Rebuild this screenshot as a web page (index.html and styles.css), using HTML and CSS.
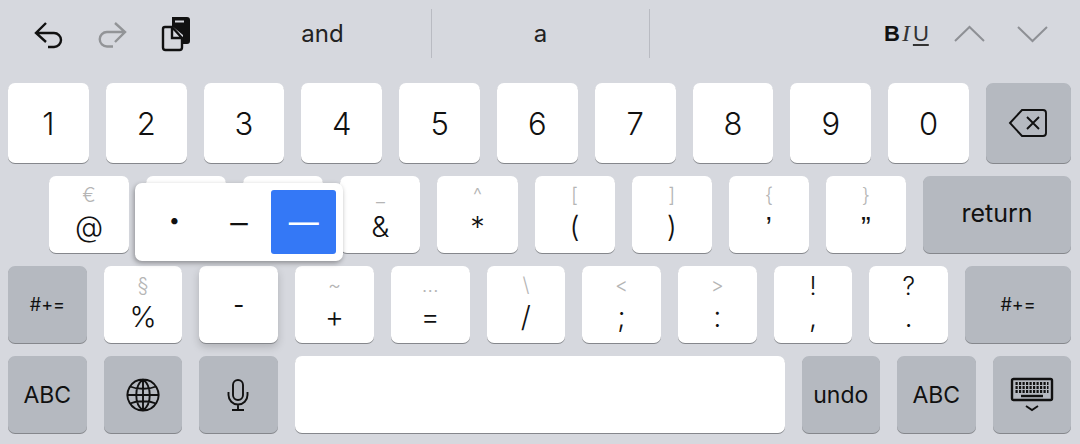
FILE: index.html
```html
<!DOCTYPE html>
<html lang="en">
<head>
    <meta charset="UTF-8">
    <title>Keyboard</title>
    <link rel="stylesheet" href="styles.css">
</head>
<body>
    <div class="keyboard">
        <div class="toolbar">
            <svg class="tool-undo" viewBox="34 16 30 32" width="30" height="32"><path d="M46 21 L36 31 L46 40 M36 31 H54 a7 7 0 0 1 0 14 H48"/></svg>
            <svg class="tool-redo" viewBox="97 16 30 32" width="30" height="32"><path d="M115 21 L125 30 L115 40 M125 30 H107 a7 7 0 0 0 0 14.5 H113"/></svg>
            <svg class="tool-paste" viewBox="160 16 32 36" width="32" height="36">
                <path class="fill" d="M172 16 H187 a3 3 0 0 1 3 3 V40 a3 3 0 0 1 -3 3 H183 V34 L172 25 Z"/>
                <path class="slot" d="M175 20.5 H184"/>
                <path class="line" d="M165 26 H172 V37 H182 V46.5 a2.5 2.5 0 0 1 -2.5 2.5 H165.5 a2.5 2.5 0 0 1 -2.5 -2.5 V28 a2 2 0 0 1 2 -2 Z M172 26 L182 37"/>
            </svg>
            <div class="word first">and</div>
            <div class="word">a</div>
            <div class="format">
                <span class="bold">B</span><span class="italic">I</span><span class="underline">U</span>
            </div>
            <svg class="chevron up" viewBox="0 0 33 18" width="33" height="18"><path d="M2 16 L16.5 2 L31 16"/></svg>
            <svg class="chevron down" viewBox="0 0 33 18" width="33" height="18"><path d="M2 2 L16.5 16 L31 2"/></svg>
        </div>

        <div class="row row-digits">
            <div class="key">1</div>
            <div class="key">2</div>
            <div class="key">3</div>
            <div class="key">4</div>
            <div class="key">5</div>
            <div class="key">6</div>
            <div class="key">7</div>
            <div class="key">8</div>
            <div class="key">9</div>
            <div class="key">0</div>
            <div class="key fn delete">
                <svg viewBox="0 0 40 30" width="40" height="30"><path d="M2 15 L14 2 H35 a3 3 0 0 1 3 3 V25 a3 3 0 0 1 -3 3 H14 Z M19 9 L31 21 M31 9 L19 21"/></svg>
            </div>
        </div>

        <div class="row row-symbols">
            <div class="key"><span class="hint">€</span><span class="label">@</span></div>
            <div class="key"></div>
            <div class="key"></div>
            <div class="key"><span class="hint">_</span><span class="label">&amp;</span></div>
            <div class="key"><span class="hint">^</span><span class="label">*</span></div>
            <div class="key"><span class="hint">[</span><span class="label">(</span></div>
            <div class="key"><span class="hint">]</span><span class="label">)</span></div>
            <div class="key"><span class="hint">{</span><span class="label quote">’</span></div>
            <div class="key"><span class="hint">}</span><span class="label quote">”</span></div>
            <div class="key fn return">return</div>
        </div>

        <div class="row row-punct">
            <div class="key fn small">#+=</div>
            <div class="key"><span class="hint">§</span><span class="label">%</span></div>
            <div class="key lifted">-</div>
            <div class="key"><span class="hint">~</span><span class="label">+</span></div>
            <div class="key"><span class="hint">…</span><span class="label">=</span></div>
            <div class="key"><span class="hint">\</span><span class="label">/</span></div>
            <div class="key"><span class="hint">&lt;</span><span class="label">;</span></div>
            <div class="key"><span class="hint">&gt;</span><span class="label">:</span></div>
            <div class="key"><span class="hint dark">!</span><span class="label">,</span></div>
            <div class="key"><span class="hint dark">?</span><span class="label">.</span></div>
            <div class="key fn small wide">#+=</div>
        </div>

        <div class="row row-bottom">
            <div class="key fn text">ABC</div>
            <div class="key fn">
                <svg viewBox="0 0 34 34" width="34" height="34"><path d="M17 1.5 a15.5 15.5 0 1 0 0.01 0 Z M17 1.5 C8 8 8 26 17 32.5 C26 26 26 8 17 1.5 Z M17 1.5 V32.5 M1.5 17 H32.5 M4 8.5 C11 11.5 23 11.5 30 8.5 M4 25.5 C11 22.5 23 22.5 30 25.5"/></svg>
            </div>
            <div class="key fn">
                <svg viewBox="0 0 24 34" width="24" height="34"><path d="M12 2 a5 5 0 0 1 5 5 V17 a5 5 0 0 1 -10 0 V7 a5 5 0 0 1 5 -5 Z M2.5 14 V17 a9.5 9.5 0 0 0 19 0 V14 M12 26.5 V32 M6 32 H18"/></svg>
            </div>
            <div class="key space"></div>
            <div class="key fn text">undo</div>
            <div class="key fn text">ABC</div>
            <div class="key fn hide-kb">
                <svg viewBox="0 0 44 36" width="44" height="36">
                    <rect class="outline" x="2" y="2" width="40" height="21" rx="1.5"/>
                    <path class="dots" d="M5.5 6.5 H38.5 M5.5 10.5 H38.5 M5.5 14.5 H38.5"/>
                    <path class="bar" d="M11 19 H33"/>
                    <path class="caret" d="M16 29 L22 33 L28 29"/>
                </svg>
            </div>
        </div>

        <div class="popup">
            <div class="choice dot">•</div>
            <div class="choice en">–</div>
            <div class="choice active">—</div>
        </div>
    </div>
</body>
</html>
```

FILE: styles.css
```css
* {
    margin: 0;
    padding: 0;
    box-sizing: border-box;
}

body {
    width: 1080px;
    height: 444px;
    overflow: hidden;
    background-color: #d6d8de;
    font-family: Inter, "Liberation Sans", sans-serif;
    color: #111;
}

.keyboard {
    position: relative;
    height: 444px;
}

svg {
    display: block;
    fill: none;
    stroke: currentColor;
}

/* toolbar */
.toolbar {
    display: flex;
    align-items: center;
    height: 67px;
    margin-bottom: 16px;
    padding-left: 34px;
}

.tool-undo {
    stroke-width: 2.4;
    color: #111;
}

.tool-redo {
    margin-left: 33px;
    stroke-width: 2.4;
    color: #929497;
}

.tool-paste {
    margin-left: 33px;
    margin-right: 22px;
    margin-top: 2px;
}

.tool-paste .fill {
    fill: #111;
    stroke: none;
}

.tool-paste .slot {
    stroke: #d6d8de;
    stroke-width: 2;
}

.tool-paste .line {
    stroke-width: 2.4;
}

.word {
    width: 218px;
    height: 49px;
    line-height: 49px;
    text-align: center;
    font-size: 24px;
    color: #222;
    border-right: 1px solid #b9bbc2;
}

.format {
    display: flex;
    align-items: center;
    margin-left: 234px;
    width: 69px;
    font-size: 22px;
    font-family: "Liberation Sans", sans-serif;
    color: #111;
}

.bold {
    font-weight: bold;
}

.italic {
    font-family: "Liberation Serif", serif;
    font-style: italic;
    font-size: 24px;
    margin: 0 3px 0 2px;
    color: #333;
}

.underline {
    text-decoration: underline;
    text-underline-offset: 3px;
    color: #333;
}

.chevron {
    color: #8e9095;
    stroke-width: 2;
}

.chevron.down {
    margin-left: 30px;
}

/* key rows */
.row {
    display: flex;
    gap: 17px;
    height: 77px;
    margin-bottom: 13px;
}

.row-digits {
    height: 80px;
    padding: 0 9px 0 8px;
}

.row-symbols {
    padding: 0 9px 0 49px;
}

.row-punct,
.row-bottom {
    padding: 0 9px 0 8px;
}

.key {
    flex: 1 1 0;
    min-width: 0;
    display: flex;
    flex-direction: column;
    align-items: center;
    justify-content: center;
    background-color: #fff;
    border-radius: 7px;
    box-shadow: 0 1px 0 #85878c;
    font-size: 31px;
    font-weight: 350;
    color: #111;
}

.key.fn {
    background-color: #b5b9c0;
}

.delete {
    flex: 0 0 85px;
}

.key.return {
    flex: 0 0 148px;
    padding-bottom: 3px;
    font-size: 25px;
    font-weight: 400;
}

.wide {
    flex: 0 0 106px;
}

.key.small {
    font-size: 18px;
    font-weight: 400;
}

.key.text {
    font-size: 23px;
    font-weight: 400;
}

.space {
    flex: 0 0 490px;
}

.key.lifted {
    font-size: 24px;
    font-weight: 400;
    box-shadow: 0 1px 0 #85878c, 0 4px 8px rgba(0, 0, 0, 0.18);
}

.hint {
    height: 24px;
    margin-top: -3px;
    margin-bottom: 3px;
    line-height: 24px;
    font-size: 20px;
    font-weight: 300;
    color: #b5b5b5;
}

.hint.dark {
    color: #111;
    font-size: 25px;
    font-weight: 350;
    margin-top: -2px;
    margin-bottom: 2px;
}

.label {
    height: 34px;
    line-height: 34px;
    font-size: 29px;
    color: #111;
}

.quote {
    font-family: "Liberation Sans", sans-serif;
    font-weight: 400;
}

.hide-kb .dots {
    stroke-width: 3;
    stroke-dasharray: 2.2 1.3;
}

.key svg {
    stroke-width: 1.9;
}

.hide-kb .outline,
.hide-kb .bar {
    stroke-width: 2.4;
}

/* long-press popup */
.popup {
    position: absolute;
    left: 135px;
    top: 183px;
    width: 208px;
    height: 78px;
    display: flex;
    padding: 7px;
    background-color: #fff;
    border-radius: 7px;
    box-shadow: -1px 2px 5px rgba(0, 0, 0, 0.35);
}

.choice {
    flex: 1 1 0;
    display: flex;
    align-items: center;
    justify-content: center;
    font-size: 30px;
    font-weight: 400;
    color: #111;
    border-radius: 3px;
}

.dot {
    font-size: 20px;
    padding-bottom: 4px;
}

.en {
    font-size: 35px;
    font-weight: 300;
}

.choice.active {
    background-color: #3478f6;
    color: #fff;
}
```
